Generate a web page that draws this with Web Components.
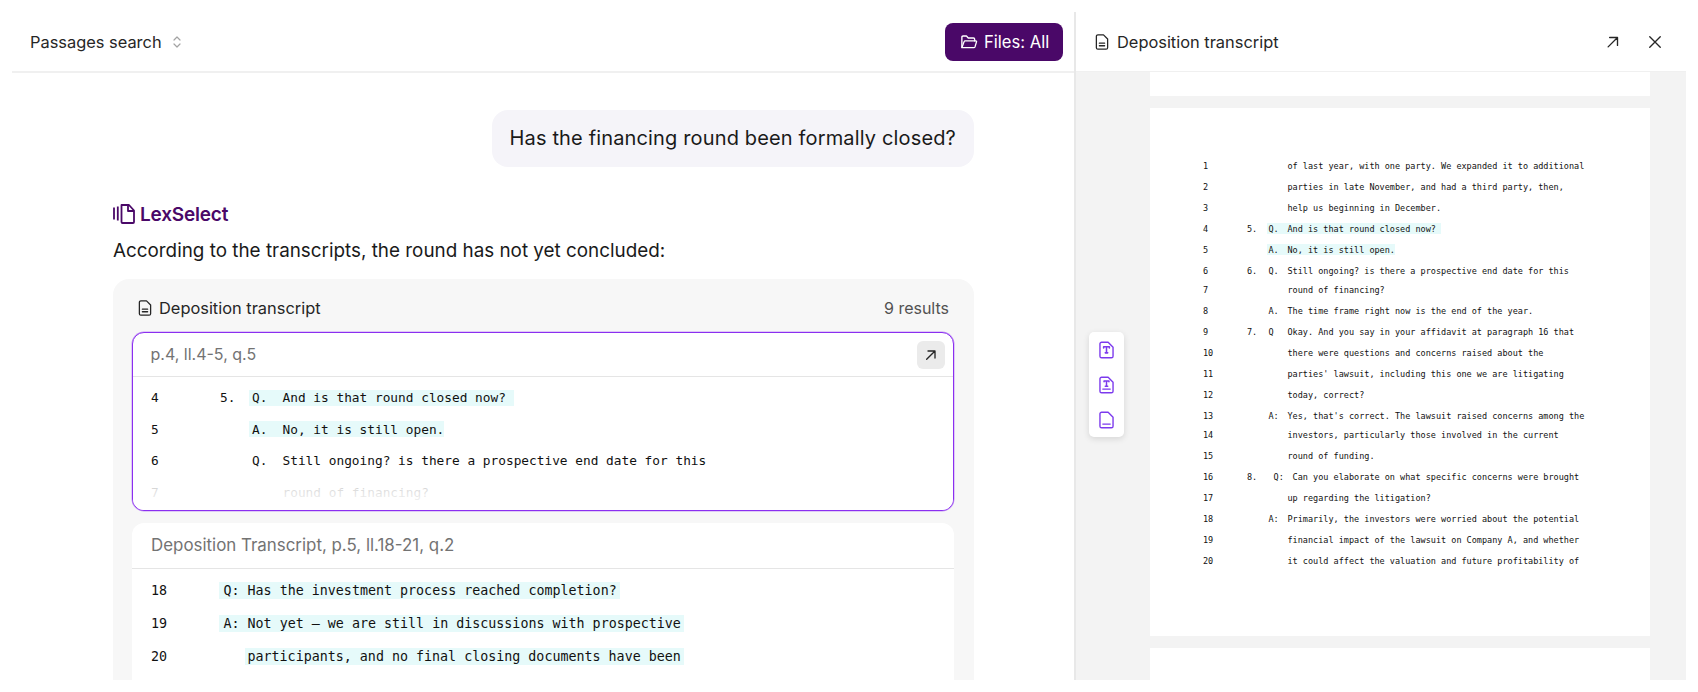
<!DOCTYPE html>
<html lang="en">
<head>
<meta charset="utf-8">
<title>Passages search</title>
<style>
html, body { margin: 0; height: 692px; overflow: hidden; background: #fff; }
body { font-family: Inter, "Liberation Sans", sans-serif; color: #171717; }
</style>
</head>
<body>
<app-shell>
	<search-panel slot="left">
		<panel-head>
			<span class="title">Passages search</span>
			<ui-icon name="updown" size="16" style="color:#a3a3a3;margin-left:7px"></ui-icon>
			<files-button slot="end">Files: All</files-button>
		</panel-head>
		<chat-bubble>Has the financing round been formally closed?</chat-bubble>
		<brand-mark>LexSelect</brand-mark>
		<answer-text>According to the transcripts, the round has not yet concluded:</answer-text>
		<result-group title="Deposition transcript" count="9 results">
			<passage-card label="p.4, ll.4-5, q.5" active style="--num-w:69px;--mark-w:29px;--label-w:30.5px;--fs:12.8px;--line-h:31.5px;--hl-h:16px;--hl-pl:3px;--body-h:133px">
				<doc-line num="4" mark="5." label="Q." hl>And is that round closed now? </doc-line>
				<doc-line num="5" label="A." hl>No, it is still open.</doc-line>
				<doc-line num="6" label="Q.">Still ongoing? is there a prospective end date for this</doc-line>
				<doc-line num="7">round of financing?</doc-line>
			</passage-card>
			<passage-card label="Deposition Transcript, p.5, ll.18-21, q.2" style="--label-fs:16.9px;--num-w:68.5px;--mark-w:0px;--label-w:0px;--fs:13.33px;--line-h:33px;--hl-h:17px;--hl-pl:5px;--hl-pr:3px;--body-h:140px;--num-x:1px">
				<doc-line num="18" hl>Q: Has the investment process reached completion?</doc-line>
				<doc-line num="19" hl>A: Not yet — we are still in discussions with prospective</doc-line>
				<doc-line num="20" hl style="--hl-ml:26px;--hl-pl:3px">participants, and no final closing documents have been</doc-line>
			</passage-card>
		</result-group>
	</search-panel>
	<doc-viewer slot="right" title="Deposition transcript">
		<doc-page style="height:24px"></doc-page>
		<doc-page lines style="height:528px;--num-w:44px;--mark-w:20px;--label-w:19px;--fs:8.5px;--line-h:21px;--hl-h:11px;--hl-pl:1.5px">
			<doc-line num="1">of last year, with one party. We expanded it to additional</doc-line>
			<doc-line num="2">parties in late November, and had a third party, then,</doc-line>
			<doc-line num="3">help us beginning in December.</doc-line>
			<doc-line num="4" mark="5." label="Q." hl>And is that round closed now? </doc-line>
			<doc-line num="5" label="A." hl>No, it is still open.</doc-line>
			<doc-line num="6" mark="6." label="Q.">Still ongoing? is there a prospective end date for this</doc-line>
			<doc-line num="7" tight>round of financing?</doc-line>
			<doc-line num="8" label="A.">The time frame right now is the end of the year.</doc-line>
			<doc-line num="9" mark="7." label="Q">Okay. And you say in your affidavit at paragraph 16 that</doc-line>
			<doc-line num="10">there were questions and concerns raised about the</doc-line>
			<doc-line num="11">parties' lawsuit, including this one we are litigating</doc-line>
			<doc-line num="12">today, correct?</doc-line>
			<doc-line num="13" label="A:">Yes, that's correct. The lawsuit raised concerns among the</doc-line>
			<doc-line num="14" tight>investors, particularly those involved in the current</doc-line>
			<doc-line num="15">round of funding.</doc-line>
			<doc-line num="16" mark="8." label=" Q:"> Can you elaborate on what specific concerns were brought</doc-line>
			<doc-line num="17">up regarding the litigation?</doc-line>
			<doc-line num="18" label="A:">Primarily, the investors were worried about the potential</doc-line>
			<doc-line num="19">financial impact of the lawsuit on Company A, and whether</doc-line>
			<doc-line num="20">it could affect the valuation and future profitability of</doc-line>
		</doc-page>
		<doc-page style="height:60px"></doc-page>
	</doc-viewer>
</app-shell>

<script>
const ICONS = {
	updown: '<path d="M5 6l3-3 3 3M5 10l3 3 3-3" stroke-width="1.2"/>',
	folder: '<path d="M2.5 19V5.5a1.5 1.5 0 0 1 1.5-1.5h4.6l2.4 2.6h7a1.5 1.5 0 0 1 1.5 1.5V10.5"/><path d="M2.5 19.5l3-8a1.5 1.5 0 0 1 1.4-1H21a1 1 0 0 1 1 1.3l-2 6.7a1.5 1.5 0 0 1-1.4 1z"/>',
	file: '<path d="M14 2.5H6.5A2 2 0 0 0 4.500 4.500v15a2 2 0 0 0 2 2h11a2 2 0 0 0 2-2V8z"/><path d="M8.500 13.500h7M8.500 17h7"/>',
	arrow: '<path d="M5.500 18.500L18 6M7.500 6H18v10.500"/>',
	close: '<path d="M5 5l14 14M19 5L5 19"/>',
	'tool-top': '<path d="M12 1.500H4A2 2 0 0 0 2 3.500v15a2 2 0 0 0 2 2h12a2 2 0 0 0 2-2V7.500z"/><path d="M6.500 8.500V7h7v1.500M10 7v7.500M8.500 14.500h3" stroke-width="1.9"/>',
	'tool-both': '<path d="M12 1.500H4A2 2 0 0 0 2 3.500v15a2 2 0 0 0 2 2h12a2 2 0 0 0 2-2V7.500z"/><path d="M7 7V6h6v1M10 6v6.500M8.500 12.500h3" stroke-width="1.8"/><path d="M5.500 16h9"/>',
	'tool-end': '<path d="M12 1.500H4A2 2 0 0 0 2 3.500v15a2 2 0 0 0 2 2h12a2 2 0 0 0 2-2V7.500z"/><path d="M5.500 16h9"/>'
};

class UiIcon extends HTMLElement {
	connectedCallback() {
		const name = this.getAttribute('name');
		const size = this.getAttribute('size') || 16;
		const h = this.getAttribute('h') || size;
		let box = '0 0 24 24';
		if (name === 'updown') box = '0 0 16 16';
		if (name.startsWith('tool')) box = '0 0 20 22';
		this.attachShadow({ mode: 'open' }).innerHTML = `
		<style>:host { display: inline-flex; flex: none; } svg { display: block; }</style>
		<svg width="${size}" height="${h}" viewBox="${box}" fill="none" stroke="currentColor" stroke-width="${this.getAttribute('stroke') || 1.8}" stroke-linecap="round" stroke-linejoin="round">${ICONS[name]}</svg>`;
	}
}
customElements.define('ui-icon', UiIcon);

class AppShell extends HTMLElement {
	constructor() {
		super();
		this.attachShadow({ mode: 'open' }).innerHTML = `
		<style>
		:host { display: flex; margin: 12px; height: 668px; overflow: hidden; }
		::slotted([slot="left"]) { width: 1062px; flex: none; }
		::slotted([slot="right"]) { flex: 1; min-width: 0; }
		</style>
		<slot name="left"></slot><slot name="right"></slot>`;
	}
}
customElements.define('app-shell', AppShell);

class SearchPanel extends HTMLElement {
	constructor() {
		super();
		this.attachShadow({ mode: 'open' }).innerHTML = `
		<style>
		:host { display: block; overflow: hidden; }
		.scroll { padding: 37px 100px 0 101px; }
		</style>
		<slot name="head"></slot>
		<div class="scroll"><slot></slot></div>`;
	}
	connectedCallback() {
		this.querySelector('panel-head').slot = 'head';
	}
}
customElements.define('search-panel', SearchPanel);

class PanelHead extends HTMLElement {
	constructor() {
		super();
		this.attachShadow({ mode: 'open' }).innerHTML = `
		<style>
		:host { display: flex; align-items: center; height: 59px; padding: 0 11px 0 18px; border-bottom: 2px solid #f0f0f0; font-size: 16.4px; font-weight: 400; color: #262626; }
		.end { margin-left: auto; display: flex; }
		</style>
		<slot></slot><div class="end"><slot name="end"></slot></div>`;
	}
}
customElements.define('panel-head', PanelHead);

class FilesButton extends HTMLElement {
	constructor() {
		super();
		this.attachShadow({ mode: 'open' }).innerHTML = `
		<style>
		:host { display: flex; align-items: center; gap: 6px; height: 38px; width: 118px; box-sizing: border-box; padding-left: 15px; background: #4a0868; color: #fff; border-radius: 8px; font-size: 16.6px; font-weight: 400; }
		</style>
		<ui-icon name="folder" size="18" stroke="1.8"></ui-icon><slot></slot>`;
	}
}
customElements.define('files-button', FilesButton);

class ChatBubble extends HTMLElement {
	constructor() {
		super();
		this.attachShadow({ mode: 'open' }).innerHTML = `
		<style>
		:host { display: block; width: max-content; margin-left: auto; background: #f5f4f9; border-radius: 16px; padding: 15px 18px; font-size: 20px; letter-spacing: 0.15px; line-height: 27px; color: #1a1a1a; }
		</style>
		<slot></slot>`;
	}
}
customElements.define('chat-bubble', ChatBubble);

class BrandMark extends HTMLElement {
	constructor() {
		super();
		this.attachShadow({ mode: 'open' }).innerHTML = `
		<style>
		:host { display: flex; align-items: center; gap: 5px; margin-top: 35px; height: 24px; color: #4a0868; font-size: 19px; font-weight: 600; letter-spacing: -0.2px; }
		svg { display: block; }
		</style>
		<svg width="22" height="20" viewBox="0 0 22 20" fill="none" stroke="currentColor" stroke-width="1.8" stroke-linejoin="round">
			<path d="M1 3.500v12M4.800 2.500v14"/>
			<path d="M8.500 1h7.500l5 5.500V18a1 1 0 0 1-1 1H9.500a1 1 0 0 1-1-1z"/>
			<path d="M15 1v6h6"/>
		</svg>
		<slot></slot>`;
	}
}
customElements.define('brand-mark', BrandMark);

class AnswerText extends HTMLElement {
	constructor() {
		super();
		this.attachShadow({ mode: 'open' }).innerHTML = `
		<style>
		:host { display: block; margin-top: 12px; font-size: 18.85px; line-height: 26px; color: #1a1a1a; }
		</style>
		<slot></slot>`;
	}
}
customElements.define('answer-text', AnswerText);

class ResultGroup extends HTMLElement {
	connectedCallback() {
		this.attachShadow({ mode: 'open' }).innerHTML = `
		<style>
		:host { display: block; margin-top: 15px; background: #f7f7f7; border-radius: 16px 16px 0 0; padding: 0 20px 0 19px; }
		.head { display: flex; align-items: center; height: 53px; padding: 4px 5px 0 4px; box-sizing: border-box; font-size: 16.4px; font-weight: 400; color: #262626; gap: 5px; }
		.count { margin-left: auto; font-size: 16px; color: #525252; }
		.list { display: flex; flex-direction: column; gap: 12px; }
		</style>
		<div class="head">
			<ui-icon name="file" size="18" stroke="1.7"></ui-icon>
			<span>${this.getAttribute('title')}</span>
			<span class="count">${this.getAttribute('count')}</span>
		</div>
		<div class="list"><slot></slot></div>`;
	}
}
customElements.define('result-group', ResultGroup);

class PassageCard extends HTMLElement {
	connectedCallback() {
		const active = this.hasAttribute('active');
		this.attachShadow({ mode: 'open' }).innerHTML = `
		<style>
		:host { display: block; position: relative; background: #fff; border-radius: 12px; overflow: hidden; box-sizing: border-box; }
		:host([active]) { border: 1px solid #8b2ff0; box-shadow: 0 0 0 .5px rgba(139,47,240,.45); overflow: visible; }
		.head { display: flex; align-items: center; justify-content: space-between; height: 44px; padding: 0 8px 0 17.500px; border-bottom: 1px solid #e5e5e5; font-size: var(--label-fs, 16px); color: #737373; box-sizing: border-box; }
		.name { padding-bottom: 2px; }
		:host(:not([active])) .head { height: 46px; padding-left: 19px; }
		.open { display: flex; align-items: center; justify-content: center; width: 28px; height: 28px; border-radius: 6px; background: #ebebeb; color: #262626; }
		.body { height: var(--body-h); padding: 5px 0 0 18px; box-sizing: border-box; overflow: hidden; }
		.fade { position: absolute; left: 0; right: 0; bottom: 0; height: 42px; border-radius: 0 0 11px 11px; background: linear-gradient(rgba(255,255,255,0), rgba(255,255,255,.85) 50%, #fff); }
		</style>
		<div class="head"><span class="name">${this.getAttribute('label')}</span>${active ? '<span class="open"><ui-icon name="arrow" size="16" stroke="2"></ui-icon></span>' : ''}</div>
		<div class="body"><slot></slot></div>
		${active ? '<div class="fade"></div>' : ''}`;
	}
}
customElements.define('passage-card', PassageCard);

class DocLine extends HTMLElement {
	connectedCallback() {
		this.attachShadow({ mode: 'open' }).innerHTML = `
		<style>
		:host { display: flex; align-items: center; height: var(--line-h); font-family: "DejaVu Sans Mono", "Liberation Mono", monospace; font-size: var(--fs); white-space: pre; color: #111; }
		:host([tight]) { margin-top: -1.7px; }
		.n { width: var(--num-w); flex: none; box-sizing: border-box; padding-left: var(--num-x, 0); }
		.m { width: var(--mark-w); flex: none; }
		.hl { display: flex; align-items: center; height: var(--hl-h); margin-left: var(--hl-ml, 0); padding: 0 var(--hl-pr, 0) 0 var(--hl-pl, 0); }
		:host([hl]) .hl { background: #e6fafa; }
		.l { width: var(--label-w); flex: none; }
		</style>
		<span class="n">${this.getAttribute('num')}</span><span class="m">${this.getAttribute('mark') || ''}</span><span class="hl"><span class="l">${this.getAttribute('label') || ''}</span><slot></slot></span>`;
	}
}
customElements.define('doc-line', DocLine);

class DocViewer extends HTMLElement {
	connectedCallback() {
		this.attachShadow({ mode: 'open' }).innerHTML = `
		<style>
		:host { display: flex; flex-direction: column; position: relative; border-left: 2px solid #e8e8e8; background: #f3f3f3; overflow: hidden; }
		.head { display: flex; align-items: center; flex: none; height: 60px; box-sizing: border-box; padding: 0 22px 0 17px; background: #fff; border-bottom: 1px solid #f0f0f0; gap: 6px; font-size: 16.4px; font-weight: 400; color: #262626; }
		.acts { margin-left: auto; display: flex; gap: 24px; }
		.pages { display: flex; flex-direction: column; gap: 12px; width: 500px; margin-left: 74px; }
		.tools { position: absolute; left: 13px; top: 320px; width: 35px; height: 105px; box-sizing: border-box; background: #fff; border-radius: 5px; box-shadow: 0 2px 6px rgba(0,0,0,.12); display: flex; flex-direction: column; align-items: center; justify-content: center; gap: 17px; color: #7c3aed; }
		</style>
		<div class="head">
			<ui-icon name="file" size="18" stroke="1.7"></ui-icon>
			<span>${this.getAttribute('title')}</span>
			<span class="acts"><ui-icon name="arrow" size="18" stroke="1.8"></ui-icon><ui-icon name="close" size="18" stroke="1.8"></ui-icon></span>
		</div>
		<div class="pages"><slot></slot></div>
		<div class="tools">
			<ui-icon name="tool-top" size="17" h="18" stroke="1.7"></ui-icon>
			<ui-icon name="tool-both" size="17" h="18" stroke="1.7"></ui-icon>
			<ui-icon name="tool-end" size="17" h="18" stroke="1.7"></ui-icon>
		</div>`;
	}
}
customElements.define('doc-viewer', DocViewer);

class DocPage extends HTMLElement {
	constructor() {
		super();
		this.attachShadow({ mode: 'open' }).innerHTML = `
		<style>
		:host { display: block; flex: none; background: #fff; box-sizing: border-box; }
		:host([lines]) { padding: 47px 0 0 53px; }
		</style>
		<slot></slot>`;
	}
}
customElements.define('doc-page', DocPage);
</script>
</body>
</html>
